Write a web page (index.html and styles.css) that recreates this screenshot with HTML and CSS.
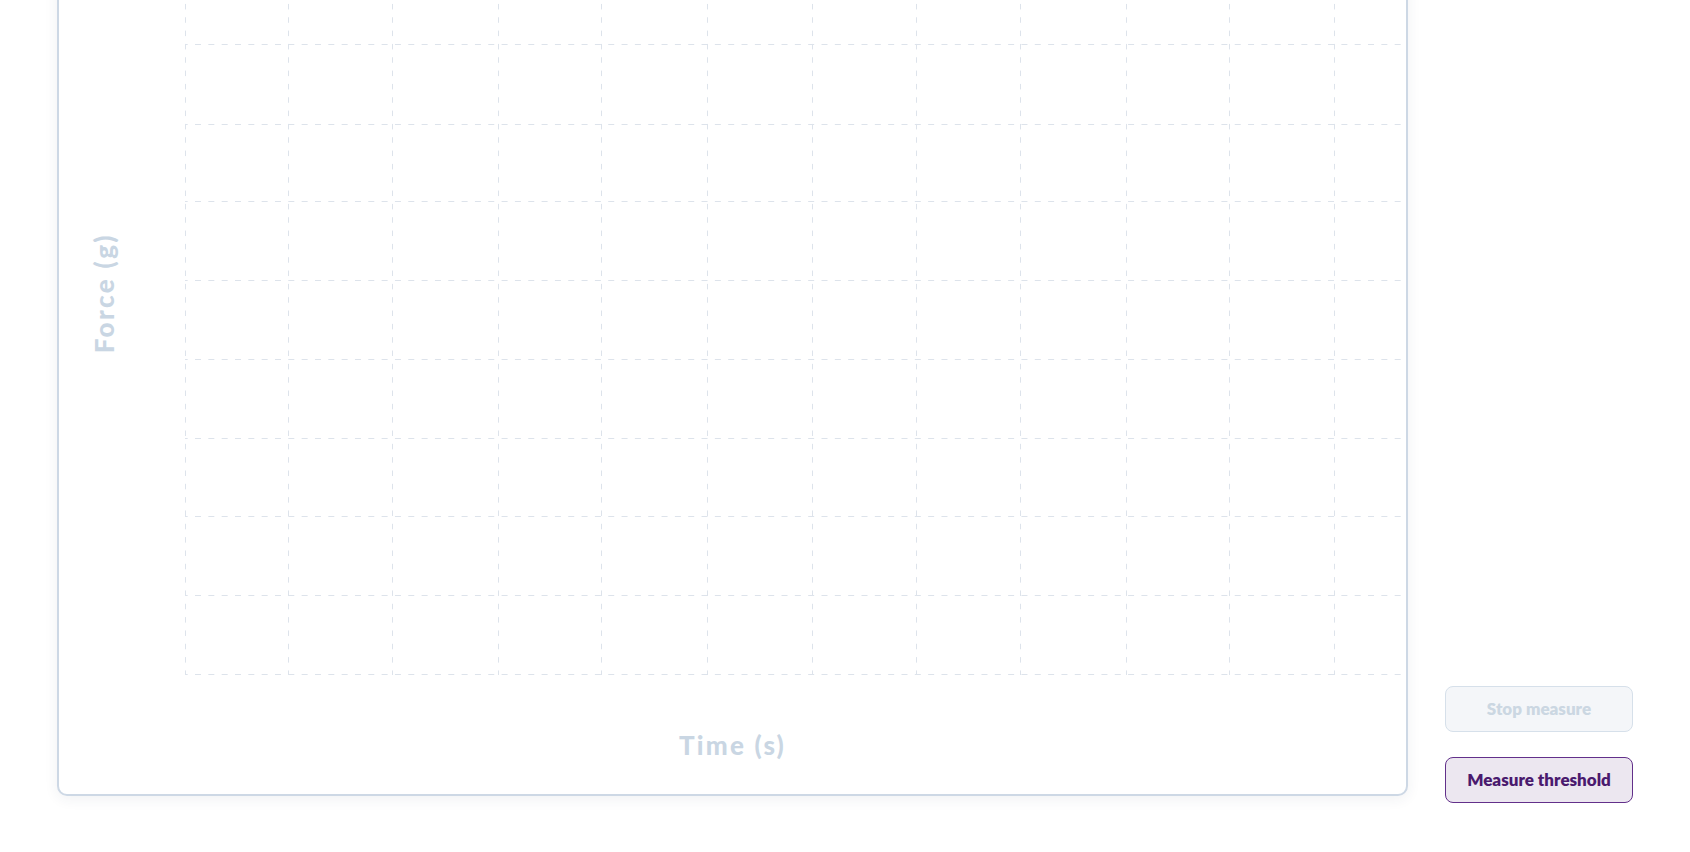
FILE: index.html
```html
<!DOCTYPE html>
<html lang="en">
<head>
<meta charset="utf-8">
<title>Force measurement</title>
<link rel="stylesheet" href="styles.css">
</head>
<body>
<main class="page">
  <section class="card">
    <div class="y-label"><span>Force (g)</span></div>
    <div class="plot">
      <svg class="grid" width="1221" height="892" viewBox="0 0 1221 892" xmlns="http://www.w3.org/2000/svg">
        <g class="grid-v">
          <line x1="0.5" y1="0" x2="0.5" y2="891"/>
          <line x1="103.5" y1="0" x2="103.5" y2="891"/>
          <line x1="207.5" y1="0" x2="207.5" y2="891"/>
          <line x1="313.5" y1="0" x2="313.5" y2="891"/>
          <line x1="416.5" y1="0" x2="416.5" y2="891"/>
          <line x1="522.5" y1="0" x2="522.5" y2="891"/>
          <line x1="627.5" y1="0" x2="627.5" y2="891"/>
          <line x1="731.5" y1="0" x2="731.5" y2="891"/>
          <line x1="835.5" y1="0" x2="835.5" y2="891"/>
          <line x1="941.5" y1="0" x2="941.5" y2="891"/>
          <line x1="1044.5" y1="0" x2="1044.5" y2="891"/>
          <line x1="1149.5" y1="0" x2="1149.5" y2="891"/>
        </g>
        <g class="grid-h">
          <line x1="0" y1="23.5" x2="1219" y2="23.5"/>
          <line x1="0" y1="102.5" x2="1219" y2="102.5"/>
          <line x1="0" y1="181.5" x2="1219" y2="181.5"/>
          <line x1="0" y1="260.5" x2="1219" y2="260.5"/>
          <line x1="0" y1="340.5" x2="1219" y2="340.5"/>
          <line x1="0" y1="417.5" x2="1219" y2="417.5"/>
          <line x1="0" y1="496.5" x2="1219" y2="496.5"/>
          <line x1="0" y1="575.5" x2="1219" y2="575.5"/>
          <line x1="0" y1="654.5" x2="1219" y2="654.5"/>
          <line x1="0" y1="732.5" x2="1219" y2="732.5"/>
          <line x1="0" y1="811.5" x2="1219" y2="811.5"/>
          <line x1="0" y1="890.5" x2="1219" y2="890.5"/>
        </g>
      </svg>
    </div>
    <div class="x-label">Time (s)</div>
  </section>
  <aside class="actions">
    <button class="btn btn-disabled" type="button" disabled>Stop measure</button>
    <button class="btn btn-primary" type="button">Measure threshold</button>
  </aside>
</main>
</body>
</html>
```
FILE: styles.css
```css
html, body {
  margin: 0;
  padding: 0;
  background: #ffffff;
  overflow: hidden;
}

body {
  font-family: Lato, "Open Sans", sans-serif;
  width: 1690px;
  height: 852px;
}

.page {
  display: flex;
  align-items: flex-end;
  gap: 37px;
  padding: 0 57px 49px 57px;
  margin-top: -218px;
}

.card {
  flex: 0 0 1351px;
  box-sizing: border-box;
  height: 1014px;
  margin-bottom: 7px;
  background: #ffffff;
  border: 2px solid #cdd8e5;
  border-radius: 10px;
  box-shadow: 0 3px 14px rgba(40, 60, 90, 0.07);
  display: grid;
  grid-template-columns: 126px 1fr;
  grid-template-rows: 892px 1fr;
}

.y-label {
  grid-column: 1;
  grid-row: 1 / 3;
  display: flex;
  align-items: center;
  padding-left: 30px;
  padding-top: 9px;
}

.y-label span {
  writing-mode: vertical-rl;
  transform: rotate(180deg);
  font-size: 26px;
  line-height: 30px;
  font-weight: 900;
  color: #c9d6e3;
  letter-spacing: 2.4px;
  white-space: nowrap;
}

.plot {
  grid-column: 2;
  grid-row: 1;
}

.grid {
  display: block;
}

.grid line {
  stroke: #dde3eb;
  stroke-width: 1;
  fill: none;
}

.grid-h line {
  stroke-dasharray: 6 7.33;
  stroke-dashoffset: 3.33;
}

.grid-v line {
  stroke-dasharray: 5.5 7.83;
  stroke-dashoffset: 6.67;
}

.x-label {
  grid-column: 1 / 3;
  grid-row: 2;
  text-align: center;
  padding-top: 54px;
  font-size: 26px;
  line-height: 30px;
  font-weight: 900;
  color: #c9d6e3;
  letter-spacing: 2.2px;
}

.actions {
  flex: 0 0 188px;
  display: flex;
  flex-direction: column;
  gap: 25px;
}

.btn {
  box-sizing: border-box;
  width: 188px;
  height: 46px;
  border-radius: 8px;
  font-family: Lato, "Open Sans", sans-serif;
  font-size: 17px;
  font-weight: 800;
  padding: 0 0 2px 0;
  cursor: pointer;
}

.btn-disabled {
  background: #f4f6f9;
  border: 1.5px solid #d6e0ea;
  color: #cbd7e2;
  cursor: default;
}

.btn-primary {
  background: #ece7f0;
  border: 1.5px solid #62308a;
  color: #4a1a6e;
}
```
